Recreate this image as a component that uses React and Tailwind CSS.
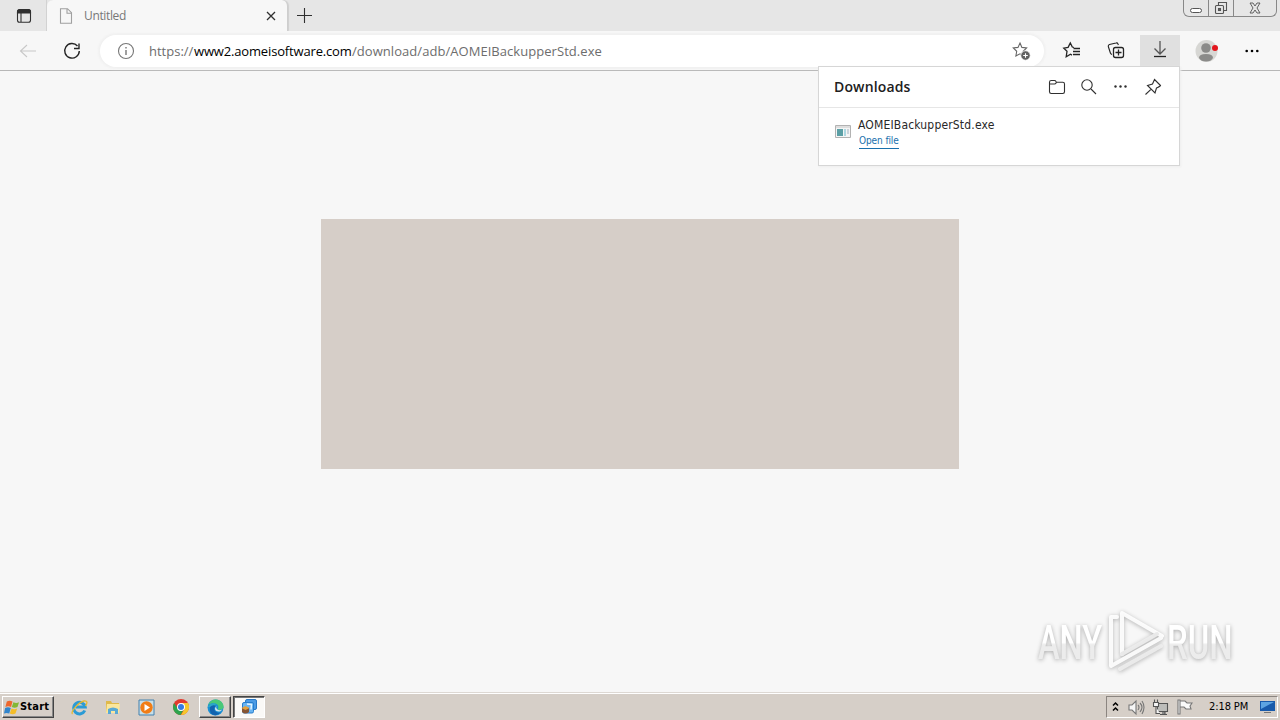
import React from "react";

const Icon = ({ className = "w-5 h-5", box = "0 0 20 20", children }) => (
  <svg className={`shrink-0 ${className}`} viewBox={box} fill="none" stroke="currentColor" strokeWidth="1.1">{children}</svg>
);

function TabStrip() {
  return (
    <header className="flex h-[31px] shrink-0 bg-[#e6e6e6] text-[#303030]">
      <div className="flex w-[47px] items-center border-r border-[#d2d2d2] pl-[14px]">
        <Icon className="w-5 h-5"><rect x="3.5" y="3.7" width="13" height="12.5" rx="2" /><path d="M3.5 7V5.5a2 2 0 0 1 2-2h9a2 2 0 0 1 2 2V7z" fill="currentColor" /><path d="M7 7v9" /></Icon>
      </div>
      <div className="flex w-[241px] items-center rounded-t-md bg-[#f7f7f7] border-r border-[#cecece] pl-[11px] shadow-[1px_0_1px_#cfcfcf]">
        <Icon className="w-4 h-4 text-[#a0a0a0]" box="0 0 16 16"><path d="M2.5 .7h7l4 4v10.6h-11zM9 .7v4.5h4.5" /></Icon>
        <span className="ml-[10px] w-[45px] whitespace-nowrap font-['Open_Sans',sans-serif] text-[12px] leading-4 tracking-[-0.35px] text-[#777]">Untitled</span>
        <Icon className="ml-auto mr-[11px] w-[10px] h-[10px]" box="0 0 10 10"><path d="m1 1 8 8m0-8L1 9" strokeWidth="1.3" /></Icon>
      </div>
      <Icon className="mt-[7px] ml-2 w-[17px] h-[17px]" box="0 0 17 17"><path d="M8.5 1v15M1 8.5h15" /></Icon>
      <div className="ml-auto mr-[3px] flex h-[17px] w-[94px] rounded-b-md border border-t-0 border-[#888] text-[#555]">
        <div className="flex w-[25px] items-end justify-center border-r border-[#888] pb-[3px]"><i className="block h-[5px] w-3 rounded-sm border border-[#555] bg-white" /></div>
        <div className="flex w-[25px] justify-center border-r border-[#888]">
          <Icon className="mt-[1px] w-[14px] h-[14px]" box="0 0 14 14"><path d="M4.5 4V1.5h8v8H10" /><rect x="1.5" y="4.5" width="8" height="8" rx="1" /><rect x="4.5" y="7.5" width="2" height="2" /></Icon>
        </div>
        <div className="flex flex-1 justify-center"><Icon className="mt-[2px] w-[12px] h-[12px]" box="0 0 12 12"><path d="M1 1h3l2 3 2-3h3L8 6l3 5H8L6 8l-2 3H1l3-5z" strokeWidth=".9" /></Icon></div>
      </div>
    </header>
  );
}

const Star = "m8 2 1.9 4.4 4.7.6-3.4 3.3.8 4.7L8 12.8l-4.1 2.2.8-4.7L1.3 7l4.7-.6z";

function Toolbar() {
  return (
    <nav className="flex h-10 shrink-0 items-center border-b border-[#b7b7b7] bg-[#f7f7f7] text-[#242424]">
      <Icon className="ml-[18px] w-5 h-5 text-[#c8c8c8]"><path d="M18 10H2m7-6-6.5 6 6.5 6" /></Icon>
      <Icon className="ml-[24px] w-5 h-5"><path d="M15.5 5A7.3 7.3 0 1 0 17.3 10M17 2.5v5h-5" strokeWidth="1.4" /></Icon>
      <div className="ml-[18px] flex h-[32px] w-[944px] items-center rounded-full bg-white pl-[17px] pr-3 font-['Open_Sans',sans-serif] text-[13px] leading-5 text-[#6d6d6d] shadow-[0_0_2px_2px_#f1f1f1]">
        <Icon className="w-[18px] h-[18px] text-[#777]" box="0 0 18 18"><circle cx="9" cy="9" r="7.5" /><path d="M9 8v5M9 5v1.5" strokeWidth="1.4" /></Icon>
        <div className="ml-[14px] flex whitespace-nowrap">
          <span className="w-[45px]">https://</span>
          <span className="w-[158px] tracking-[-0.16px] text-black">www2.aomeisoftware.com</span>
          <span className="w-[250px] tracking-[0.05px]">/download/adb/AOMEIBackupperStd.exe</span>
        </div>
        <Icon className="ml-auto mr-px w-5 h-5 text-[#666]"><path d={Star} transform="translate(1 0)" /><circle cx="14.5" cy="14.5" r="4.7" fill="#606060" stroke="white" strokeWidth=".7" /><path d="M12.2 14.5h4.6m-2.3-2.3v4.6" stroke="white" /></Icon>
      </div>
      <Icon className="ml-[18px] w-5 h-5"><path d="M12 6.5 10.3 6 8.3 2 6.1 6.4 1.8 7.1l3.2 3.2-.8 5.5 4.3-2.5 1.5.8M11.5 7.5H18m-7 3h7m-7 3h7" strokeWidth="1.3" /></Icon>
      <Icon className="ml-6 w-5 h-5"><path d="M6 13.5Q4.7 13 4.4 12L2.3 5.5Q2 4 3.5 3.5L10 2q1.5-.4 2 1l.4 1" /><rect x="7.5" y="6.5" width="10" height="10" rx="2" strokeWidth="1.3" /><path d="M12.5 8.5v6m-3-3h6" strokeWidth="1.3" /></Icon>
      <div className="ml-[14px] mt-1 flex h-[35px] w-10 justify-center bg-[#e0e0e0] pt-[4px]"><Icon className="w-5 h-5"><path d="M10 2v13m-5.500-5.500L10 15l5.500-5.500" stroke="#555" strokeWidth="1.3" /><path d="M4 17.500h12" strokeWidth="1.300" /></Icon></div>
      <svg className="ml-[15px] h-6 w-6" viewBox="0 0 24 24"><circle cx="11.5" cy="12" r="11" fill="#d7d7d4" /><circle cx="11" cy="9" r="4.8" fill="#8b8b89" /><path d="M4 19q0-4 7-4t7 4q-2 3.5-7 3.5T4 19" fill="#8b8b89" /><circle cx="20" cy="9" r="3" fill="#e3161d" /></svg>
      <svg className="ml-[25px] h-4 w-4" viewBox="0 0 16 16"><circle cx="2.7" cy="8" r="1.3" /><circle cx="8" cy="8" r="1.3" /><circle cx="13.3" cy="8" r="1.3" /></svg>
    </nav>
  );
}

function Downloads() {
  return (
    <section className="absolute top-[66px] left-[818px] h-[100px] w-[362px] border border-[#d6d6d6] bg-white font-['DejaVu_Sans_Condensed','DejaVu_Sans',sans-serif] shadow-[1px_1px_2px_#eee]">
      <div className="flex h-[41px] items-center border-b border-[#e6e6e6] pl-[15px] pr-[17px] text-[#303030]">
        <h1 className="w-[100px] font-['Open_Sans',sans-serif] text-[14px] font-semibold leading-5 tracking-[0.15px] text-[#202020]">Downloads</h1>
        <Icon className="ml-auto w-[18px] h-[18px]" box="0 0 18 18"><path d="M1.5 13.8V4.2q0-1.7 1.7-1.7h3.3q1 0 1.5 1l.5.8h6.3q1.7 0 1.7 1.7v7.8q0 1.7-1.7 1.7H3.2q-1.7 0-1.7-1.7M1.5 6h5q1 0 1.4-.8l.5-1" /></Icon>
        <Icon className="ml-[14px] w-[18px] h-[18px]" box="0 0 18 18"><circle cx="7" cy="7" r="5.2" /><path d="m11 11 5 5" /></Icon>
        <svg className="ml-[15px] h-4 w-4" viewBox="0 0 16 16" fill="#303030"><circle cx="2.5" cy="7.5" r="1.2" /><circle cx="7.5" cy="7.5" r="1.2" /><circle cx="12.5" cy="7.5" r="1.2" /></svg>
        <Icon className="ml-[15px] w-[18px] h-[18px]" box="0 0 18 18"><path d="m10.5 1.500 6 6q-.2.800-4 2.500l-1.500 5-7.500-7.500 5-1.500zM7.200 11.200 1.500 16.500" /></Icon>
      </div>
      <div className="flex pl-[16px] pt-[9px]">
        <svg className="mt-[7px] h-[15px] w-4" viewBox="0 0 16 15"><path d="M.5 1.5h15v12H.5z" fill="#f5f5f5" stroke="#b2b2b2" /><path d="M1 2h14v2H1z" fill="#dedede" /><path d="M2 5h6v7H2z" fill="#5b9fa5" /><path d="M9 5h2v7H9z" fill="#acd7e0" /><path d="M12 5h2v5h-2z" fill="#ccd4dc" /></svg>
        <div className="ml-[7px]">
          <p className="w-[150px] whitespace-nowrap text-[12px] leading-4 tracking-[0.17px] text-[#282828]">AOMEIBackupperStd.exe</p>
          <a className="mt-[1px] ml-px block h-[15px] w-10 whitespace-nowrap border-b border-[#1970ad] text-[10px] leading-[14px] tracking-[-0.1px] text-[#1970ad]">Open file</a>
        </div>
      </div>
    </section>
  );
}

function Watermark() {
  return (
    <div className="absolute left-[1037px] top-[606px] h-[70px] w-[202px]">
      <svg className="h-full w-full drop-shadow-[0_1px_2px_#aaa]" viewBox="0 0 202 70">
        <defs><linearGradient id="shine" x1="0" y1="0" x2="0" y2="1"><stop offset=".52" stopColor="#fff" /><stop offset=".56" stopColor="#ececec" /></linearGradient></defs>
        <g fill="url(#shine)" fontFamily="Roboto, sans-serif" fontSize="49" fontWeight="500">
          <text transform="translate(1 52.500) scale(.72 1)" textLength="89" lengthAdjust="spacingAndGlyphs">ANY</text>
          <text transform="translate(130 52.500) scale(.72 1)" textLength="91" lengthAdjust="spacingAndGlyphs">RUN</text>
        </g>
        <g fill="none" stroke="#fff" strokeWidth="4" strokeLinejoin="round" strokeLinecap="round" opacity=".9"><path d="M85 48V7l40 23M80 11h-6v49l50-28" /><path d="M85 48l35-20M83 63l41-23" stroke="#eee" /></g>
      </svg>
    </div>
  );
}

const raised = "flex items-center border border-t-white border-l-white border-r-[#444] border-b-[#444] shadow-[inset_-1px_-1px_#888]";

function Taskbar() {
  return (
    <footer className="flex h-[27px] shrink-0 items-start border-t border-white bg-[#d6cfc8] pt-[2px]">
      <button className={`ml-[2px] h-[22px] w-[52px] pl-px ${raised}`}>
        <svg className="h-[17px] w-4 shrink-0" viewBox="0 0 17 17"><path d="M3 2q3-1.500 6 0L7.500 8q-3-1.500-6 0z" fill="#ee672d" /><path d="M10 3q3 1.500 6 0l-1.700 5q-3 1.500-6 0z" fill="#83b735" /><path d="M1.200 9q3-1.500 6 0l-1.600 6q-3-1.500-5.600 0z" fill="#3285cc" /><path d="M8 9.500q3 1.500 6 0L12.200 15q-3 1.500-6 0z" fill="#f4bd28" /></svg>
        <b className="font-['DejaVu_Sans_Condensed','DejaVu_Sans',sans-serif] text-[11px] leading-4 tracking-[0.2px] text-black">Start</b>
      </button>
      <svg className="ml-[17px] mt-[3px] h-[17px] w-[17px]" viewBox="0 0 17 17" fill="none"><path d="M13.800 11.500A5.800 5.800 0 1 1 14.200 8H5" stroke="#2b9bd5" strokeWidth="3" /><path d="M1.500 15C-1 13 8 3 13 2q5-.5 1.500 5" stroke="#e5b931" strokeWidth="1.300" /></svg>
      <svg className="ml-[17px] mt-[3px] h-[17px] w-4" viewBox="0 0 16 17"><path d="M1 2h5l1 2h7v9H1z" fill="#dfb94b" /><path d="M2 5h13l-1 9H1z" fill="#fae69c" /><path d="M3 10q5-3 10 0v5h-3v-3H6v3H3z" fill="#58a9d5" /></svg>
      <svg className="ml-[17px] mt-[3px] h-[17px] w-[17px]" viewBox="0 0 17 17"><path d="M1 1h15v15H1z" fill="#c8dfe8" stroke="#4380ae" /><circle cx="8.500" cy="8.500" r="6.200" fill="#f17d16" /><path d="m6.500 5 5.500 3.500L6.500 12z" fill="#fff" /></svg>
      <svg className="ml-[18px] mt-[3px] h-4 w-4" viewBox="0 0 16 16"><circle cx="8" cy="8" r="8" fill="#e23a2e" /><path d="M1.100 4A8 8 0 0 0 7.500 16L11 10H5z" fill="#2da44e" /><path d="M8 16A8 8 0 0 0 15 4H8l3.500 6z" fill="#f6c72c" /><circle cx="8" cy="8" r="4" fill="#fff" /><circle cx="8" cy="8" r="3" fill="#367be2" /></svg>
      <div className={`ml-[10px] h-[22px] w-[32px] justify-center ${raised}`}>
        <svg className="h-[17px] w-[17px]" viewBox="0 0 17 17"><circle cx="8.500" cy="8.500" r="8" fill="#198fd5" /><path d="M1 6Q4-.5 10 .6c5 1 8 6 6 9-2 2-6 1.500-5 0 2-5-5-7-10-3.600" fill="#49c878" /><path d="M1 7Q5 3 9 5l-2 3H1" fill="#2ca7c8" /><path d="M3 8q3-3 6-1-3 2-1 5 3 3 6 1-3 4-7 3-5-1-4-8" fill="#1262ae" /><path d="M10 6.500q-2 2 .5 4 2 1.500 5 0l-2.500 2q-5 .5-5-3 .5-2 2-3" fill="#d6e5e5" /></svg>
      </div>
      <div className="ml-[2px] flex h-[22px] w-[32px] items-center justify-center border border-t-[#444] border-l-[#444] border-r-white border-b-white bg-[#faf9f7] shadow-[inset_1px_1px_#777]">
        <svg className="h-[18px] w-[18px]" viewBox="0 0 18 18"><rect x="5.500" y="1.500" width="11" height="10" rx="1.500" fill="#4b9be5" stroke="#2878c6" /><rect x="2.500" y="4.500" width="11" height="10.500" rx="1.500" fill="#68b4f2" stroke="#287dcc" /><path d="m7 6 4.500.5-.5 5" fill="none" stroke="#e2f3ff" strokeWidth="1.500" /><path d="M2 10h7v4q-3.500 3-7 0z" fill="#865534" /><path d="m1.500 10 4-2 4 2-4 2z" fill="#e4a13c" /></svg>
      </div>
      <div className="ml-auto mr-[2px] flex h-[22px] w-[172px] items-center border border-t-[#8b8580] border-l-[#8b8580] border-r-white border-b-white pl-[4px]">
        <Icon className="w-[9px] h-[13px] text-black" box="0 0 9 13"><path d="m2 4.500 2.500-2.500L7 4.500M2 9.500 4.500 7 7 9.500" strokeWidth="1.500" /></Icon>
        <Icon className="ml-[8px] w-[17px] h-[17px] text-[#777]" box="0 0 17 17"><path d="M1 6h3l4-4v13l-4-4H1z" fill="#f6f6f6" /><path d="M10 6q2 2 0 5m2-7q4 4 0 9m2-11q4 6 0 13" /></Icon>
        <Icon className="ml-[7px] w-[17px] h-[17px] text-[#555]" box="0 0 17 17"><path d="M5.500 4.500h10v8h-10zM8 15.500h7M10 13h3v2h-3" fill="#bdbdba" /><path d="M1.500 3.500h5v4h-5zM2.500 3V.5M5.500 3V.5M4 8v6.500h4" fill="#f5f5f5" /></Icon>
        <Icon className="ml-[7px] w-[17px] h-[17px] text-[#777]" box="0 0 17 17"><path d="M2 1h2v14H2zM4 2h5l2 2h5l-2 3 1 3h-5L8 8H4z" fill="#fafafa" /></Icon>
        <span className="ml-[16px] w-[42px] whitespace-nowrap font-['DejaVu_Sans_Condensed','DejaVu_Sans',sans-serif] text-[11px] leading-4 tracking-[-0.1px] text-black">2:18 PM</span>
        <svg className="ml-[8px] h-[14px] w-4" viewBox="0 0 16 14"><path d="M1 1h15v10H1z" fill="#185aab" /><path d="M2 2h13L2 9z" fill="#5da4e2" /><path d="M5 12h7v1H5z" fill="#777" /></svg>
      </div>
    </footer>
  );
}

export default function App() {
  return (
    <div className="relative flex h-[720px] w-[1280px] flex-col overflow-hidden bg-[#f7f7f7]">
      <TabStrip />
      <Toolbar />
      <main className="flex flex-1 justify-center border-b border-[#ddd8d3] pt-[148px]"><div className="h-[250px] w-[638px] bg-[#d6cec8]" /></main>
      <Taskbar />
      <Downloads />
      <Watermark />
    </div>
  );
}
